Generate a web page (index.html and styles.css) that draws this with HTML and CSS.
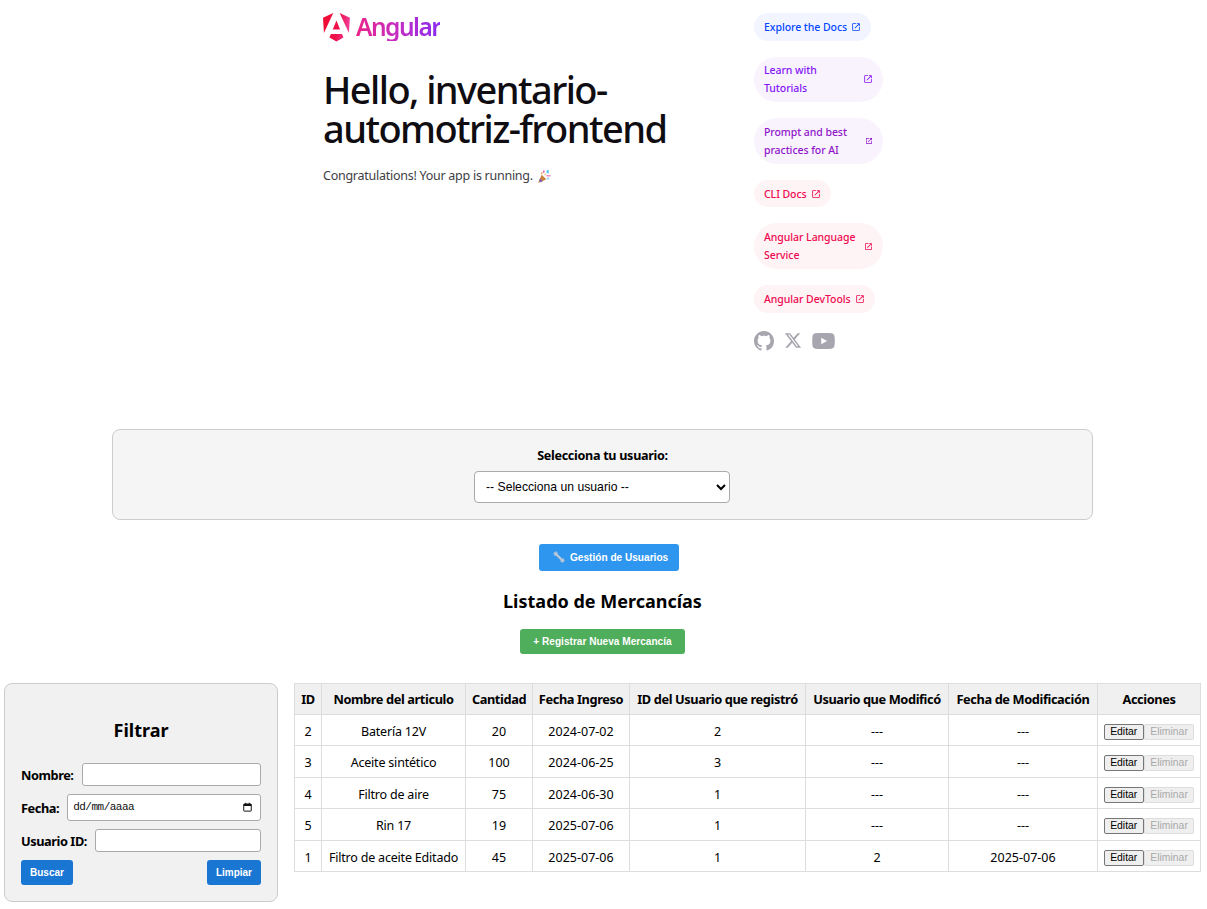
FILE: index.html
```html
<!DOCTYPE html>
<html lang="es">
<head>
<meta charset="utf-8">
<title>inventario-automotriz-frontend</title>
<link rel="stylesheet" href="styles.css">
</head>
<body>
<svg class="defs" width="0" height="0" aria-hidden="true">
  <defs>
    <symbol id="ext" viewBox="0 -960 960 960"><path fill="currentColor" d="M200-120q-33 0-56.5-23.5T120-200v-560q0-33 23.5-56.5T200-840h280v80H200v560h560v-280h80v280q0 33-23.5 56.5T760-120H200Zm188-212-56-56 372-372H560v-80h280v280h-80v-144L388-332Z"/></symbol>
    <linearGradient id="shield" x1="0" y1="0.15" x2="1" y2="0.35">
      <stop offset="0" stop-color="#ee0b2f"/><stop offset="0.6" stop-color="#f0124c"/><stop offset="1" stop-color="#f0409a"/>
    </linearGradient>
  </defs>
</svg>
<main class="intro">
  <div class="intro-content">
    <div class="left-side">
      <div class="logo">
        <svg class="logo-mark" viewBox="0 0 223 239" aria-hidden="true"><path fill="url(#shield)" d="M222.077 39.192l-8.019 125.923L137.387 0l84.69 39.192Zm-53.105 162.825-57.933 33.056-57.934-33.056 11.783-28.556h92.301l11.783 28.556ZM111.039 62.675l30.357 73.803H80.681l30.358-73.803ZM7.937 165.115 0 39.192 84.69 0 7.937 165.115Z"/></svg>
        <span class="logo-word">Angular</span>
      </div>
      <h1>Hello, inventario-automotriz-frontend</h1>
      <p class="congrats">Congratulations! Your app is running.
        <svg class="emoji" viewBox="0 0 16 16" aria-hidden="true"><path fill="#c8803a" d="M5 6 1.200 14.800l8.800-3.800z"/><path fill="#7d5cb8" d="M3.200 10 6.200 13l-2.400 1-1.600-1.600z"/><path fill="#e94f9c" d="M6.500 1.500h1.500v2.500H6.500z"/><path fill="#ef6fb5" d="M10 6.600h4.500v1.300H10z"/><path fill="#5ac8ee" d="M10.200 1.200h2.400v3.400h-2.400z"/><path fill="#f0913c" d="M4.500 3.500h1.300v2H4.500z"/><path fill="#9ad0f5" d="M10.500 9.200h2.500v2h-2.500z"/><path fill="#e8c04a" d="M8 5h1.500v1.500H8z"/></svg>
      </p>
    </div>
    <div class="right-side">
      <div class="pill-group">
        <a class="pill pill-blue" href="#"><span>Explore the Docs</span><svg class="pill-icon"><use href="#ext"/></svg></a>
        <a class="pill pill-violet" href="#"><span>Learn with Tutorials</span><svg class="pill-icon"><use href="#ext"/></svg></a>
        <a class="pill pill-french" href="#"><span>Prompt and best practices for AI</span><svg class="pill-icon pill-icon-xs"><use href="#ext"/></svg></a>
        <a class="pill pill-pink" href="#"><span>CLI Docs</span><svg class="pill-icon"><use href="#ext"/></svg></a>
        <a class="pill pill-pink" href="#"><span>Angular Language Service</span><svg class="pill-icon pill-icon-sm"><use href="#ext"/></svg></a>
        <a class="pill pill-pink" href="#"><span>Angular DevTools</span><svg class="pill-icon"><use href="#ext"/></svg></a>
      </div>
      <div class="social">
        <svg class="social-gh" viewBox="0 0 16 16" aria-label="Github"><path fill="currentColor" d="M8 0C3.58 0 0 3.58 0 8c0 3.54 2.29 6.53 5.47 7.59.4.07.55-.17.55-.38 0-.19-.01-.82-.01-1.49-2.01.37-2.53-.49-2.69-.94-.09-.23-.48-.94-.82-1.13-.28-.15-.68-.52-.01-.53.63-.01 1.08.58 1.23.82.72 1.21 1.87.87 2.33.66.07-.52.28-.87.51-1.07-1.78-.2-3.64-.89-3.64-3.95 0-.87.31-1.59.82-2.15-.08-.2-.36-1.02.08-2.12 0 0 .67-.21 2.2.82.64-.18 1.32-.27 2-.27.68 0 1.36.09 2 .27 1.53-1.04 2.2-.82 2.2-.82.44 1.1.16 1.92.08 2.12.51.56.82 1.27.82 2.15 0 3.07-1.87 3.75-3.65 3.95.29.25.54.73.54 1.48 0 1.07-.01 1.93-.01 2.2 0 .21.15.46.55.38A8.013 8.013 0 0016 8c0-4.42-3.58-8-8-8z"/></svg>
        <svg class="social-x" viewBox="0 0 24 24" aria-label="X"><path fill="currentColor" d="M18.244 2.25h3.308l-7.227 8.26 8.502 11.24H16.17l-5.214-6.817L4.99 21.75H1.68l7.73-8.835L1.254 2.25H8.08l4.713 6.231zm-1.161 17.52h1.833L7.084 4.126H5.117z"/></svg>
        <svg class="social-yt" viewBox="0 0 24 17" aria-label="YouTube"><path fill="currentColor" fill-rule="evenodd" d="M3.4.3C6 0 9 0 12 0s6 0 8.600.3c1.500.2 2.700 1.300 3 2.800.3 1.700.4 3.500.4 5.400s-.1 3.700-.4 5.400c-.3 1.500-1.500 2.600-3 2.800-2.600.3-5.600.3-8.600.3s-6 0-8.600-.3c-1.500-.2-2.700-1.300-3-2.800C.1 12.200 0 10.400 0 8.500s.1-3.700.4-5.400C.7 1.600 1.900.5 3.400.3ZM9.600 5v7l6.200-3.500z"/></svg>
      </div>
    </div>
  </div>
</main>

<div class="controls">
  <section class="user-box">
    <label class="user-label" for="user">Selecciona tu usuario:</label>
    <select class="user-select" id="user"><option>-- Selecciona un usuario --</option></select>
  </section>

  <div class="actions">
    <button class="btn btn-blue" type="button">
      <svg class="wrench" viewBox="0 0 12 12" aria-hidden="true"><path fill="none" stroke="#bcc8d4" stroke-width="2.200" stroke-linecap="round" d="M3 3l6.500 6.500"/><path fill="none" stroke="#bcc8d4" stroke-width="1.300" stroke-linecap="round" d="M1 2.800 2.800 1M2 4.200 4.200 2M8 10.200 10.200 8M9.300 11 11 9.300"/></svg>
      Gestión de Usuarios</button>
    <h2 class="list-title">Listado de Mercancías</h2>
    <button class="btn btn-green" type="button">+ Registrar Nueva Mercancía</button>
  </div>
</div>

<div class="workspace">
  <aside class="filter">
    <h3 class="filter-title">Filtrar</h3>
    <div class="field"><label for="f-nombre">Nombre:</label><input id="f-nombre" class="input" type="text"></div>
    <div class="field"><label for="f-fecha">Fecha:</label>
      <div class="date-input"><input id="f-fecha" class="date-text" type="text" placeholder="dd/mm/aaaa">
        <svg class="cal" viewBox="0 0 12 13" aria-hidden="true"><path fill="none" stroke="#111" stroke-width="1.300" d="M1.600 2.500h8.800a.6.6 0 0 1 .6.6v8.300a.6.6 0 0 1-.6.6H1.600a.6.6 0 0 1-.6-.6V3.100a.6.6 0 0 1 .6-.6Z"/><path fill="#111" d="M1 2.500h10v2.800H1zM3 .8h1.300v2H3zM7.700 .8H9v2H7.700z"/></svg>
      </div>
    </div>
    <div class="field"><label for="f-uid">Usuario ID:</label><input id="f-uid" class="input" type="text"></div>
    <div class="filter-actions">
      <button class="btn btn-dark" type="button">Buscar</button>
      <button class="btn btn-dark" type="button">Limpiar</button>
    </div>
  </aside>

  <table class="stock">
    <colgroup>
      <col class="c-id"><col class="c-name"><col class="c-qty"><col class="c-date"><col class="c-reg"><col class="c-mod"><col class="c-moddate"><col class="c-act">
    </colgroup>
    <thead>
      <tr><th>ID</th><th>Nombre del articulo</th><th>Cantidad</th><th>Fecha Ingreso</th><th>ID del Usuario que registró</th><th>Usuario que Modificó</th><th>Fecha de Modificación</th><th>Acciones</th></tr>
    </thead>
    <tbody>
      <tr><td>2</td><td class="item">Batería 12V</td><td>20</td><td>2024-07-02</td><td>2</td><td>---</td><td>---</td><td class="row-actions"><button class="mini" type="button">Editar</button><button class="mini" type="button" disabled>Eliminar</button></td></tr>
      <tr><td>3</td><td class="item">Aceite sintético</td><td>100</td><td>2024-06-25</td><td>3</td><td>---</td><td>---</td><td class="row-actions"><button class="mini" type="button">Editar</button><button class="mini" type="button" disabled>Eliminar</button></td></tr>
      <tr><td>4</td><td class="item">Filtro de aire</td><td>75</td><td>2024-06-30</td><td>1</td><td>---</td><td>---</td><td class="row-actions"><button class="mini" type="button">Editar</button><button class="mini" type="button" disabled>Eliminar</button></td></tr>
      <tr><td>5</td><td class="item">Rin 17</td><td>19</td><td>2025-07-06</td><td>1</td><td>---</td><td>---</td><td class="row-actions"><button class="mini" type="button">Editar</button><button class="mini" type="button" disabled>Eliminar</button></td></tr>
      <tr><td>1</td><td class="item">Filtro de aceite Editado</td><td>45</td><td>2025-07-06</td><td>1</td><td>2</td><td>2025-07-06</td><td class="row-actions"><button class="mini" type="button">Editar</button><button class="mini" type="button" disabled>Eliminar</button></td></tr>
    </tbody>
  </table>
</div>
</body>
</html>
```
FILE: styles.css
```css
* { box-sizing: border-box; }
html, body { margin: 0; padding: 0; }
body { font-family: "Noto Sans", "Open Sans", sans-serif; color: #000; background: #fff; font-size: 12.5px; }
.defs { position: absolute; }

.intro { display: flex; justify-content: center; padding: 13px 1px 0 0; }
.intro-content { width: 560px; display: flex; justify-content: space-between; }
.left-side { width: 400px; }
.logo { display: flex; align-items: center; gap: 6px; height: 28px; }
.logo-mark { width: 27px; height: 29px; }
.logo-word {
  font-size: 24.5px; font-weight: 600; letter-spacing: -1.5px; line-height: 28px;
  background: linear-gradient(90deg, #ea2488 0%, #c42cc4 50%, #8a2cf0 100%);
  -webkit-background-clip: text; background-clip: text; color: transparent;
}
h1 { margin: 29px 0 0; font-size: 38px; font-weight: 500; line-height: 39px; letter-spacing: -1.58px; color: #0f0d12; }
.congrats { margin: 19px 0 0; font-size: 12.5px; line-height: 18px; letter-spacing: -.26px; color: #403e45; display: flex; align-items: center; gap: 4px; }
.emoji { width: 15px; height: 15px; }

.right-side { width: 129px; display: flex; flex-direction: column; }
.pill-group { display: flex; flex-direction: column; align-items: flex-start; gap: 16px; }
.pill {
  display: flex; align-items: center; gap: 4px; padding: 4.8px 10px 4.800px; border-radius: 23px;
  font-size: 10.5px; line-height: 18px; font-weight: 500; letter-spacing: -.06px; text-decoration: none;
}
.pill span { flex: 1; }
.pill-icon { width: 10px; height: 10px; flex: none; }
.pill-icon-sm { width: 9px; height: 9px; }
.pill-icon-xs { width: 8px; height: 8px; }
.pill-blue { color: #0546ff; background: #f2f5ff; }
.pill-violet { color: #8514f5; background: #f9f3fe; }
.pill-french { color: #9015c8; background: #f9f3fe; }
.pill-pink { color: #ee0a50; background: #fef3f5; }
.social { display: flex; align-items: center; gap: 10px; margin-top: 18px; color: #a7a5ad; }
.social-gh { width: 20px; height: 20px; }
.social-x { width: 18px; height: 19px; }
.social-yt { width: 23px; height: 16px; }

.controls { padding-right: 2px; }
.user-box {
  width: 981px; height: 91px; margin: 78px auto 0; padding: 17px 0 0;
  display: flex; flex-direction: column; align-items: center; gap: 6px;
  background: #f5f5f5; border: 1px solid #ccc; border-radius: 8px;
}
.user-label { font-size: 12.6px; font-weight: 700; line-height: 18px; letter-spacing: -.3px; }
.user-select {
  width: 256px; height: 32px; margin-right: 1px; padding: 0 7px; font-family: "Liberation Sans", Arial, sans-serif; font-size: 12.2px;
  background: #fff; border: 1px solid #aaa; border-radius: 4px; color: #000;
}

.actions { display: flex; flex-direction: column; align-items: center; margin-top: 24px; }
.btn {
  border: 0; border-radius: 3px; color: #fff; font-family: "Liberation Sans", Arial, sans-serif;
  font-size: 10.1px; font-weight: 700; cursor: pointer;
}
.btn-blue { width: 140px; height: 27px; margin-left: 13px; padding: 0 0 0 14px; background: #2f96f0; display: flex; align-items: center; gap: 5px; }
.wrench { width: 12px; height: 12px; flex: none; }
.list-title { margin: 18px 0 16px; font-size: 18px; line-height: 24px; font-weight: 700; }
.btn-green { width: 165px; height: 25px; background: #4fae5b; }
.btn-dark { height: 25px; padding: 0 9px; background: #1976d2; font-size: 10px; }

.workspace { display: flex; align-items: flex-start; gap: 16px; margin-top: 29px; padding: 0 0 0 4px; }
.filter {
  width: 274px; height: 219px; flex: none; padding: 0 16px; background: #f1f1f1;
  border: 1px solid #ccc; border-radius: 8px;
}
.filter-title { margin: 33px 0 20px; text-align: center; font-size: 18px; line-height: 26px; font-weight: 700; }
.field { display: flex; align-items: center; gap: 8px; margin-bottom: 8px; }
.field label { padding-top: 1px; font-size: 12.8px; font-weight: 700; line-height: 22px; letter-spacing: -.45px; }
.input { flex: 1; min-width: 0; height: 23px; padding: 0 4px; border: 1px solid #aaa; border-radius: 3px; background: #fff; }
.date-input {
  flex: 1; min-width: 0; height: 27px; display: flex; align-items: center; padding: 0 8px 0 5px;
  background: #fff; border: 1px solid #aaa; border-radius: 3px;
}
.date-text { flex: 1; min-width: 0; border: 0; padding: 0; outline: 0; font-family: "Liberation Mono", monospace; font-size: 11px; letter-spacing: -.5px; }
.date-text::placeholder { color: #111; opacity: 1; }
.cal { width: 9px; height: 10px; flex: none; }
.filter-actions { display: flex; justify-content: space-between; }

.stock { width: 906px; flex: none; table-layout: fixed; border-collapse: collapse; font-size: 12.5px; }
.c-id { width: 27px; } .c-name { width: 144px; } .c-qty { width: 67px; } .c-date { width: 97px; }
.c-reg { width: 176px; } .c-mod { width: 143px; } .c-moddate { width: 149px; } .c-act { width: 103px; }
.stock th, .stock td { border: 1px solid #ddd; text-align: center; white-space: nowrap; }
.stock th { height: 31px; padding: 0; background: #f0f0f0; font-weight: 700; font-size: 12.8px; letter-spacing: -.4px; }
.stock td { height: 31.5px; padding: 3px 0 0; }
.stock .item { letter-spacing: -.2px; }
.stock .row-actions { font-size: 0; padding-top: 4px; }
.mini {
  font-family: "Liberation Sans", Arial, sans-serif; font-size: 10.4px; line-height: 12px; height: 16px; padding: 0 5.5px;
  border: 1px solid #767676; border-radius: 2px; background: #efefef; color: #000; vertical-align: middle;
}
.mini:disabled { background: #efefef; border-color: #ddd; color: #aaa; }
```
